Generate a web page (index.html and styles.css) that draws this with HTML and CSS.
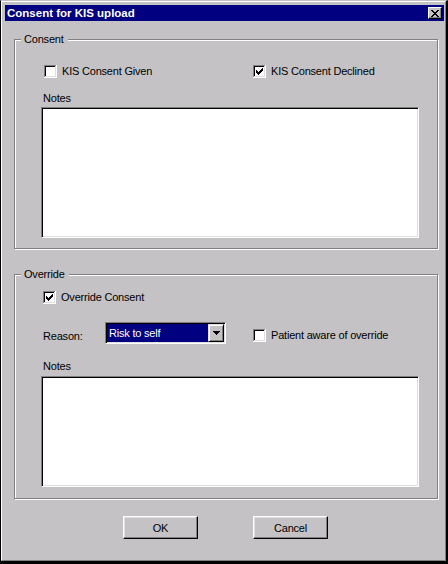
FILE: index.html
```html
<!DOCTYPE html>
<html>
<head>
<meta charset="utf-8">
<title>Consent for KIS upload</title>
<link rel="stylesheet" href="styles.css">
</head>
<body>
<div class="frame">
  <div class="window">
    <div class="titlebar">
      <span class="title">Consent for KIS upload</span>
      <span class="close">
        <svg width="8" height="7" viewBox="0 0 8 7" shape-rendering="crispEdges"><path d="M0 0h2v1h-2zM6 0h2v1h-2zM1 1h2v1h-2zM5 1h2v1h-2zM2 2h4v1h-4zM3 3h2v1h-2zM2 4h4v1h-4zM1 5h2v1h-2zM5 5h2v1h-2zM0 6h2v1h-2zM6 6h2v1h-2z" fill="#000"/></svg>
      </span>
    </div>
    <div class="content">
      <div class="group consent">
        <div class="legend">Consent</div>
        <div class="cbrow">
          <div class="check c1">
            <svg class="cb" width="13" height="13" viewBox="0 0 13 13" shape-rendering="crispEdges"><rect width="13" height="13" fill="#fff"/><path d="M0 0h12v1H1v11H0z" fill="#808080"/><path d="M1 1h10v1H2v9H1z" fill="#000"/><path d="M12 0h1v13H0v-1h12z" fill="#fff"/><path d="M11 1h1v11H1v-1h10z" fill="#dfdfdf"/></svg>
            <span>KIS Consent Given</span>
          </div>
          <div class="check">
            <svg class="cb" width="13" height="13" viewBox="0 0 13 13" shape-rendering="crispEdges"><rect width="13" height="13" fill="#fff"/><path d="M0 0h12v1H1v11H0z" fill="#808080"/><path d="M1 1h10v1H2v9H1z" fill="#000"/><path d="M12 0h1v13H0v-1h12z" fill="#fff"/><path d="M11 1h1v11H1v-1h10z" fill="#dfdfdf"/><path d="M3 5h1v3h-1zM4 6h1v3h-1zM5 7h1v3h-1zM6 6h1v3h-1zM7 5h1v3h-1zM8 4h1v3h-1zM9 3h1v3h-1z" fill="#000"/></svg>
            <span>KIS Consent Declined</span>
          </div>
        </div>
        <div class="notes-label">Notes</div>
        <div class="textarea ta1"></div>
      </div>

      <div class="group override">
        <div class="legend">Override</div>
        <div class="check ov-check">
          <svg class="cb" width="13" height="13" viewBox="0 0 13 13" shape-rendering="crispEdges"><rect width="13" height="13" fill="#fff"/><path d="M0 0h12v1H1v11H0z" fill="#808080"/><path d="M1 1h10v1H2v9H1z" fill="#000"/><path d="M12 0h1v13H0v-1h12z" fill="#fff"/><path d="M11 1h1v11H1v-1h10z" fill="#dfdfdf"/><path d="M3 5h1v3h-1zM4 6h1v3h-1zM5 7h1v3h-1zM6 6h1v3h-1zM7 5h1v3h-1zM8 4h1v3h-1zM9 3h1v3h-1z" fill="#000"/></svg>
          <span>Override Consent</span>
        </div>
        <div class="reason-row">
          <span class="reason-label">Reason:</span>
          <div class="combo">
            <span class="combo-field">Risk to self</span>
            <span class="combo-btn">
              <svg width="7" height="4" viewBox="0 0 7 4" shape-rendering="crispEdges"><path d="M0 0h7v1H0zM1 1h5v1H1zM2 2h3v1H2zM3 3h1v1H3z" fill="#000"/></svg>
            </span>
          </div>
          <div class="check aware">
            <svg class="cb" width="13" height="13" viewBox="0 0 13 13" shape-rendering="crispEdges"><rect width="13" height="13" fill="#fff"/><path d="M0 0h12v1H1v11H0z" fill="#808080"/><path d="M1 1h10v1H2v9H1z" fill="#000"/><path d="M12 0h1v13H0v-1h12z" fill="#fff"/><path d="M11 1h1v11H1v-1h10z" fill="#dfdfdf"/></svg>
            <span>Patient aware of override</span>
          </div>
        </div>
        <div class="notes-label ov-notes">Notes</div>
        <div class="textarea ta2"></div>
      </div>

      <div class="buttons">
        <button class="btn" type="button">OK</button>
        <button class="btn" type="button">Cancel</button>
      </div>
    </div>
  </div>
</div>
</body>
</html>
```

FILE: styles.css
```css
* {
  box-sizing: border-box;
}

html,
body {
  margin: 0;
  padding: 0;
}

body {
  background: #000;
  font-family: "Liberation Sans", Arial, sans-serif;
  font-size: 11px;
  letter-spacing: -0.2px;
  color: #000;
}

.frame {
  width: 448px;
  height: 564px;
  border-style: solid;
  border-width: 1px 2px 3px 1px;
  border-color: #c5c2c6 #000 #000 #000;
}

.window {
  height: 100%;
  background: #c5c2c6;
  border: 1px solid;
  border-color: #fff #808080 #808080 #fff;
  padding: 3px 1px 0 3px;
}

.titlebar {
  height: 16px;
  background: #000080;
  display: flex;
  align-items: center;
  justify-content: space-between;
  padding: 0 2px;
}

.title {
  color: #fff;
  font-weight: bold;
  font-size: 11.5px;
  letter-spacing: 0;
}

.close {
  width: 14px;
  height: 12px;
  background: #c5c2c6;
  display: flex;
  align-items: center;
  justify-content: center;
  border: 1px solid;
  border-color: #fff #000 #000 #fff;
  box-shadow: inset -1px -1px 0 #808080;
}

.group {
  margin-left: 9px;
  width: 424px;
  border: 1px solid #808080;
  box-shadow: 1px 1px 0 #fff, inset 1px 1px 0 #fff;
}

.consent {
  margin-top: 18px;
  padding: 0 0 10px 26px;
}

.override {
  margin-top: 25px;
  padding: 0 0 11px 26px;
}

.legend {
  width: fit-content;
  margin: -7px 0 0 -20px;
  padding: 0 4px 0 3px;
  background: #c5c2c6;
  height: 13px;
  line-height: 13px;
}

.check {
  display: flex;
  align-items: center;
  gap: 5px;
  height: 13px;
  line-height: 13px;
  white-space: nowrap;
}

.cb {
  display: block;
  flex: none;
}

.cbrow {
  display: flex;
  margin-top: 19px;
}

.c1 {
  margin-left: 3px;
  width: 209px;
}

.notes-label {
  margin: 14px 0 0 2px;
  height: 13px;
  line-height: 13px;
}

.ov-notes {
  margin-top: 16px;
}

.textarea {
  width: 378px;
  background: #fff;
  border: 1px solid;
  border-color: #808080 #fff #fff #808080;
  box-shadow: inset 1px 1px 0 #000, inset -1px -1px 0 #dfdfdf;
}

.ta1 {
  margin-top: 2px;
  height: 131px;
}

.ta2 {
  margin-top: 3px;
  height: 111px;
}

.ov-check {
  margin: 10px 0 0 2px;
}

.reason-row {
  display: flex;
  align-items: flex-start;
  margin-top: 18px;
  height: 22px;
}

.reason-label {
  width: 64px;
  padding-left: 2px;
  margin-top: 8px;
  line-height: 13px;
}

.combo {
  width: 121px;
  height: 22px;
  display: flex;
  background: #fff;
  border: 1px solid;
  border-color: #808080 #fff #fff #808080;
  box-shadow: inset 1px 1px 0 #000, inset -1px -1px 0 #dfdfdf;
  padding: 1px;
}

.combo-field {
  width: 101px;
  height: 18px;
  background: #000080;
  color: #fff;
  line-height: 18px;
  padding-left: 2px;
}

.combo-btn {
  width: 16px;
  height: 18px;
  background: #c5c2c6;
  display: flex;
  align-items: center;
  justify-content: center;
  border: 1px solid;
  border-color: #dfdfdf #000 #000 #dfdfdf;
  box-shadow: inset 1px 1px 0 #fff, inset -1px -1px 0 #808080;
}

.aware {
  margin: 7px 0 0 27px;
}

.buttons {
  display: flex;
  gap: 55px;
  margin-top: 17px;
  padding-left: 118px;
}

.btn {
  width: 75px;
  height: 23px;
  padding: 0;
  margin: 0;
  font-family: "Liberation Sans", Arial, sans-serif;
  font-size: 11px;
  letter-spacing: -0.2px;
  color: #000;
  background: #c5c2c6;
  border: 1px solid;
  border-color: #fff #000 #000 #fff;
  box-shadow: inset -1px -1px 0 #808080, inset 1px 1px 0 #dfdfdf;
  display: flex;
  align-items: center;
  justify-content: center;
}
```
